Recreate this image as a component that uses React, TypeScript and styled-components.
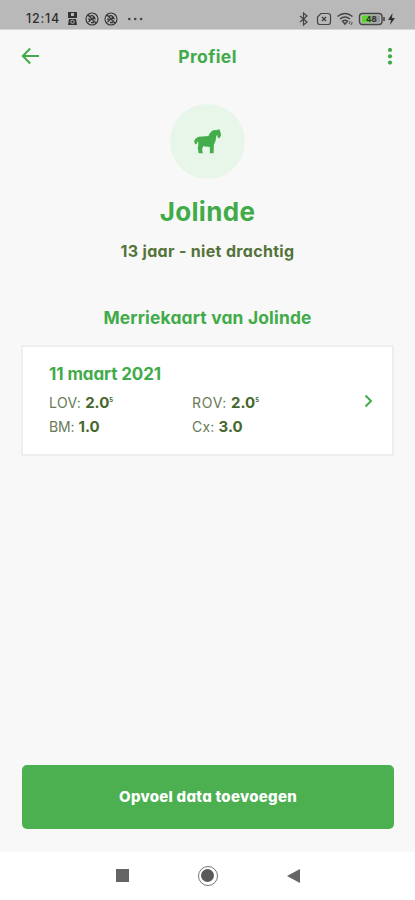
import React from 'react';
import styled, { createGlobalStyle } from 'styled-components';

const GlobalStyle = createGlobalStyle`
  * { box-sizing: border-box; }
  body { margin: 0; background: #f8f8f8; }
`;

const Screen = styled.div`
  width: 415px;
  height: 900px;
  display: flex;
  flex-direction: column;
  background: #f8f8f8;
  color: #42ab49;
  font-family: Inter, 'Open Sans', sans-serif;
  font-feature-settings: 'cv11' 1, 'ss03' 1;
  overflow: hidden;
`;

const StatusBar = styled.div`
  height: 30px;
  flex: none;
  padding: 8px 18px 0 26px;
  display: flex;
  justify-content: space-between;
  align-items: center;
  background: #b9b9b9;
  border-bottom: 1px solid #d5d5d5;
  color: #303030;
`;

const StatusGroup = styled.div<{ $gap: number }>`
  display: flex;
  align-items: center;
  gap: ${(p) => p.$gap}px;
  svg { display: block; }
`;

const Clock = styled.span`
  width: 36px;
  font-size: 12.5px;
  font-weight: 500;
  line-height: 20px;
  letter-spacing: 0.8px;
  white-space: nowrap;
`;

const NoticeIcons = styled.span`
  display: flex;
  gap: 5px;
  margin-left: 2px;

  svg:first-child { margin-right: 3px; }
`;

const Header = styled.header`
  height: 54px;
  flex: none;
  display: grid;
  grid-template-columns: 40px 1fr 40px;
  align-items: center;
  padding: 0 12px;
  svg { display: block; }
`;

const IconButton = styled.button<{ $end?: boolean }>`
  border: 0;
  padding: ${(p) => (p.$end ? '0 0 0 24px' : '0 0 0 9px')};
  background: none;
  color: inherit;
`;

const Text = styled.div<{ $size: number; $spacing?: number; $dark?: boolean; $line?: number }>`
  margin: 0;
  font-size: ${(p) => p.$size}px;
  line-height: ${(p) => p.$line ?? 24}px;
  letter-spacing: ${(p) => p.$spacing ?? 0}px;
  font-weight: 700;
  color: ${(p) => (p.$dark ? '#54733a' : '#42ab49')};
  text-align: center;
  white-space: nowrap;
`;

const Profile = styled.section`
  display: flex;
  flex-direction: column;
  align-items: center;
  padding-top: 20px;
`;

const Avatar = styled.div`
  width: 75px;
  height: 75px;
  border-radius: 50%;
  background: #e7f6e8;
  display: grid;
  place-items: center;
  margin-bottom: 15px;
`;

const Name = styled(Text)`margin-bottom: 9px;`;

const CardSection = styled.section`
  padding: 43px 21px 0;
`;

const Card = styled.article`
  margin-top: 15px;
  height: 111px;
  border: 2px solid #eeeeec;
  background: #fff;
  display: grid;
  grid-template-columns: 1fr 22px;
  align-items: center;
  padding: 0 6px 0 26px;
`;

const CardBody = styled.div`
  display: flex;
  flex-direction: column;
  align-items: flex-start;
`;

const Measurements = styled.div`
  display: grid;
  grid-template-columns: 143px 143px;
  grid-auto-rows: 24px;
  margin-top: 5px;
`;

const Measurement = styled.div`
  display: flex;
  gap: 4px;
  color: #687957;
  font-size: 14px;
  line-height: 24px;
  white-space: nowrap;
`;

const Label = styled.span<{ $spacing: number }>`letter-spacing: ${(p) => p.$spacing}px;`;

const Value = styled.strong`
  color: #45662c;
  font-size: 15px;
  font-weight: 700;
  letter-spacing: 0;
`;

const Superscript = styled.sup`
  font-size: 6px;
  line-height: 0;
  vertical-align: 6px;
`;

const Footer = styled.footer`
  margin-top: auto;
  padding: 0 21px 23px 22px;
`;

const AddButton = styled.button`
  display: block;
  width: 372px;
  height: 64px;
  border: 0;
  border-radius: 5px;
  padding: 0 0 2px;
  background: #4cb050;
  color: #fff;
  font-family: inherit;
  font-feature-settings: inherit;
  font-size: 15px;
  font-weight: 800;
  letter-spacing: 0.27px;
`;

const Navigation = styled.nav`
  height: 48px;
  flex: none;
  background: #fff;
  display: flex;
  align-items: center;
  justify-content: center;
  gap: 69px;
  padding-bottom: 1px;
  color: #646464;
  svg { display: block; }
`;

const SquareKey = styled.span`
  width: 13px;
  height: 13px;
  background: #646464;
`;

const HomeKey = styled.span`
  width: 20px;
  height: 20px;
  border: 1.5px solid #747474;
  border-radius: 50%;
  display: grid;
  place-items: center;
  &::after {
    content: '';
    width: 13px;
    height: 13px;
    border-radius: 50%;
    background: #5a5a5a;
  }
`;

const Horse = () => (
  <svg width="29" height="27" viewBox="130 96 86 80" fill="#43ad4c">
    <path d="M134 133C138 123 148 120 159 121L176 120C179 110 186 103 195 102L198 103L208 100L212 109L213 119L208 126L203 124L202 117L199 120C198 130 197 138 192 145L191 171L180 171L180 152L160 150L157 159L159 171L147 171L144 155C147 147 146 140 145 135C142 137 143 142 138 145C134 141 133 137 134 133Z" />
  </svg>
);

const MutedIcon = () => (
  <svg width="14" height="14" viewBox="0 0 14 14" fill="none" stroke="#333">
    <circle cx="7" cy="7" r="6" strokeWidth="1.1" />
    <path d="M3 3l8 8M3.5 10l3-3M5 4.2c2-1.4 4-.4 5 2.4L7.5 6M3.5 6.5l1.5 2M6 10.5h3" strokeWidth="1.3" />
  </svg>
);

const measurements = [
  { label: 'LOV:', value: '2.0', sup: '5', spacing: 0.4 },
  { label: 'ROV:', value: '2.0', sup: '5', spacing: 0.75 },
  { label: 'BM:', value: '1.0', spacing: -0.1 },
  { label: 'Cx:', value: '3.0', spacing: 0.2 },
];

export default function App() {
  return (
    <>
      <GlobalStyle />
      <Screen>
        <StatusBar>
          <StatusGroup $gap={4}>
            <Clock>12:14</Clock>
            <NoticeIcons>
              <svg width="9" height="13" viewBox="0 0 9 13">
                <path d="M0 0h9v6H0zM1 7h7l1 6H0z" fill="#333" />
                <path d="M3 1h3v3H3z" fill="#b9b9b9" />
                <circle cx="4.5" cy="9.8" r="1.7" fill="#333" stroke="#b9b9b9" />
              </svg>
              <MutedIcon />
              <MutedIcon />
            </NoticeIcons>
            <svg width="22" height="4" viewBox="0 0 22 4" fill="#444">
              <circle cx="7.3" cy="2" r="1.3" /><circle cx="13.2" cy="2" r="1.3" /><circle cx="19.1" cy="2" r="1.3" />
            </svg>
          </StatusGroup>
          <StatusGroup $gap={0}>
            <svg width="98" height="14" viewBox="299 12 98 14" fill="none" stroke="#444" strokeWidth="1.2">
              <path d="M300 16l7 6-3.5 3V13l3.5 3-7 6" />
              <path d="M321 13.5h7q2.5 0 2.5 2.5v6q0 2.5-2.5 2.5h-8q-2.5 0-2.5-2.5v-5z" />
              <path d="M322 17l4 4M326 17l-4 4" strokeWidth="1.4" />
              <path d="M337.5 16.5q7.5-6 15 0M340 19q5-4 10 0M342.5 21.2q2.5-2 5 0L345 24z" strokeWidth="1.5" />
              <path d="M349 24l1.3-3M351 25l1.3-3" strokeWidth=".9" />
              <rect x="359.5" y="13.5" width="22.5" height="11" rx="3" strokeWidth="1.4" />
              <path d="M362 15.5h9v7h-9z" fill="#59d52b" stroke="none" />
              <path d="M371 15.5h9v7h-9z" fill="#999" stroke="none" />
              <path d="M384 17v4" strokeWidth="1.6" />
              <text x="366" y="22" fill="#303030" stroke="none" fontSize="8" fontWeight="700">48</text>
              <path d="M392.5 13l-4.5 7h3l-1 5 5-7h-3z" fill="#333" stroke="none" />
            </svg>
          </StatusGroup>
        </StatusBar>
        <Header>
          <IconButton aria-label="Terug">
            <svg width="20" height="18" viewBox="0 0 20 18" fill="none" stroke="currentColor" strokeWidth="2">
              <path d="M18 8H2M9.2 .5L1.8 8l7.4 7.5" />
            </svg>
          </IconButton>
          <Text as="h1" $size={17.5} $spacing={0.4}>Profiel</Text>
          <IconButton $end aria-label="Meer">
            <svg width="6" height="18" viewBox="0 0 6 18" fill="currentColor">
              <circle cx="3" cy="2" r="2.1" /><circle cx="3" cy="8.3" r="2.1" /><circle cx="3" cy="14.6" r="2.1" />
            </svg>
          </IconButton>
        </Header>
        <Profile>
          <Avatar><Horse /></Avatar>
          <Name $size={26} $line={36} $spacing={0.35}>Jolinde</Name>
          <Text $size={16} $spacing={0.32} $dark>13 jaar - niet drachtig</Text>
        </Profile>
        <CardSection>
          <Text as="h2" $size={17.4} $spacing={0.18}>Merriekaart van Jolinde</Text>
          <Card>
            <CardBody>
              <Text as="h3" $size={17} $spacing={-0.1}>11 maart 2021</Text>
              <Measurements>
                {measurements.map((m) => (
                  <Measurement key={m.label}>
                    <Label $spacing={m.spacing}>{m.label}</Label>
                    <Value>{m.value}{m.sup && <Superscript>{m.sup}</Superscript>}</Value>
                  </Measurement>
                ))}
              </Measurements>
            </CardBody>
            <svg width="9" height="14" viewBox="0 0 9 14" fill="none" stroke="#42ab49" strokeWidth="2">
              <path d="M1.5 1.5L7 7l-5.5 5.5" />
            </svg>
          </Card>
        </CardSection>
        <Footer><AddButton>Opvoel data toevoegen</AddButton></Footer>
        <Navigation>
          <SquareKey />
          <HomeKey />
          <svg width="13" height="14" viewBox="0 0 13 14" fill="#646464"><path d="M13 0v14L0 7z" /></svg>
        </Navigation>
      </Screen>
    </>
  );
}
